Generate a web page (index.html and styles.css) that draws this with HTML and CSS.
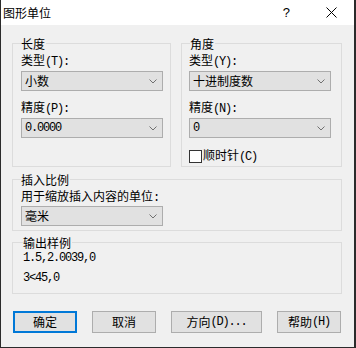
FILE: index.html
```html
<!DOCTYPE html>
<html lang="zh-CN">
<head>
<meta charset="utf-8">
<title>图形单位</title>
<link rel="stylesheet" href="styles.css">
</head>
<body>
<div class="win">
  <div class="titlebar">
    <span class="title">图形单位</span>
    <span class="help">?</span>
    <svg class="close" width="11" height="11" viewBox="0 0 11 11"><path d="M0.5 0.5L10.5 10.5M10.5 0.5L0.5 10.5" stroke="#000" stroke-width="1" fill="none"/></svg>
  </div>
  <div class="content">
    <div class="row">
      <fieldset class="grp len">
        <legend>长度</legend>
        <div class="lbl">类型<span class="m">(T):</span></div>
        <div class="sel"><span>小数</span><svg class="chev" width="8" height="5" viewBox="0 0 8 5"><path d="M0.5 0.5L4 4L7.5 0.5" stroke="#707070" fill="none"/></svg></div>
        <div class="lbl">精度<span class="m">(P):</span></div>
        <div class="sel last"><span class="m">0.0000</span><svg class="chev" width="8" height="5" viewBox="0 0 8 5"><path d="M0.5 0.5L4 4L7.5 0.5" stroke="#707070" fill="none"/></svg></div>
      </fieldset>
      <fieldset class="grp ang">
        <legend>角度</legend>
        <div class="lbl">类型<span class="m">(Y):</span></div>
        <div class="sel"><span>十进制度数</span><svg class="chev" width="8" height="5" viewBox="0 0 8 5"><path d="M0.5 0.5L4 4L7.5 0.5" stroke="#707070" fill="none"/></svg></div>
        <div class="lbl">精度<span class="m">(N):</span></div>
        <div class="sel last"><span class="m">0</span><svg class="chev" width="8" height="5" viewBox="0 0 8 5"><path d="M0.5 0.5L4 4L7.5 0.5" stroke="#707070" fill="none"/></svg></div>
        <div class="chk"><span class="box"></span><span>顺时针<span class="m">(C)</span></span></div>
      </fieldset>
    </div>
    <fieldset class="grp scale">
      <legend>插入比例</legend>
      <div class="lbl">用于缩放插入内容的单位<span class="m">:</span></div>
      <div class="sel last"><span>毫米</span><svg class="chev" width="8" height="5" viewBox="0 0 8 5"><path d="M0.5 0.5L4 4L7.5 0.5" stroke="#707070" fill="none"/></svg></div>
    </fieldset>
    <fieldset class="grp out">
      <legend>输出样例</legend>
      <div class="sample m">1.5,2.0039,0</div>
      <div class="sample m second">3&lt;45,0</div>
    </fieldset>
    <div class="btns">
      <div class="btn def">确定</div>
      <div class="btn">取消</div>
      <div class="btn wide">方向<span class="m">(D)...</span></div>
      <div class="btn">帮助<span class="m">(H)</span></div>
    </div>
  </div>
</div>
</body>
</html>
```
FILE: styles.css
```css
html, body {
  margin: 0;
  padding: 0;
  background: #f0f0f0;
}
body {
  font-family: "Noto Sans CJK SC", "Noto Sans", sans-serif;
  font-size: 12px;
  color: #000;
}
.m {
  font-family: "Liberation Mono", monospace;
  font-size: 12px;
  letter-spacing: -1.2px;
}
.win {
  width: 356px;
  height: 348px;
  box-sizing: border-box;
  border-left: 1px solid #2b2b2b;
  border-right: 2px solid #2b2b2b;
  border-bottom: 1px solid #2b2b2b;
  background: #f0f0f0;
  display: flex;
  flex-direction: column;
}
.titlebar {
  height: 25px;
  flex: none;
  background: #fff;
  display: flex;
  align-items: center;
  padding: 0 17px 0 2px;
}
.title {
  line-height: 14px;
}
.help {
  margin-left: auto;
  margin-right: 36px;
  font-family: "Liberation Sans", sans-serif;
  font-size: 13px;
  line-height: 14px;
}
.close {
  display: block;
}
.content {
  flex: 1;
  padding: 11px 12px 0 11px;
}
.row {
  display: flex;
  gap: 10px;
}
.grp {
  margin: 0;
  min-width: 0;
  box-sizing: border-box;
  border: 1px solid #dcdcdc;
  padding: 0 0 0 8px;
}
.grp legend {
  padding: 0 1px 0 0;
  line-height: 15px;
}
.len {
  width: 159px;
  padding: 1px 0 2px 8px;
}
.ang {
  width: 161px;
  padding: 1px 0 2px 7px;
}
.ang legend {
  margin-left: 1px;
}
.lbl {
  height: 16px;
  line-height: 16px;
  margin-bottom: 3px;
}
.sel {
  width: 142px;
  height: 20px;
  box-sizing: border-box;
  border: 1px solid #adadad;
  background: #e1e1e1;
  display: flex;
  align-items: center;
  padding-left: 3px;
  margin-bottom: 8px;
  line-height: 16px;
}
.sel.last {
  margin-bottom: 0;
}
.chev {
  display: block;
  margin-left: auto;
  margin-right: 5px;
}
.chk {
  margin-top: 10px;
  height: 16px;
  line-height: 16px;
  display: flex;
  align-items: center;
}
.box {
  width: 13px;
  height: 13px;
  box-sizing: border-box;
  border: 1px solid #333;
  background: #fff;
  margin-right: 1px;
}
.scale {
  margin-top: 5px;
  padding: 0 0 4px 8px;
}
.scale .lbl {
  margin-top: 1px;
  height: 15px;
  line-height: 15px;
}
.out {
  margin-top: 4px;
  padding: 0 0 7px 10px;
}
.sample {
  height: 16px;
  line-height: 16px;
}
.sample.second {
  margin-top: 4px;
}
.btns {
  margin-top: 17px;
  padding: 0 1px;
  display: flex;
  justify-content: space-between;
}
.btn {
  width: 64px;
  height: 22px;
  box-sizing: border-box;
  border: 1px solid #adadad;
  background: #e1e1e1;
  display: flex;
  align-items: center;
  justify-content: center;
  line-height: 16px;
}
.btn.wide {
  width: 91px;
}
.btn.def {
  border: 2px solid #0078d7;
}
```
